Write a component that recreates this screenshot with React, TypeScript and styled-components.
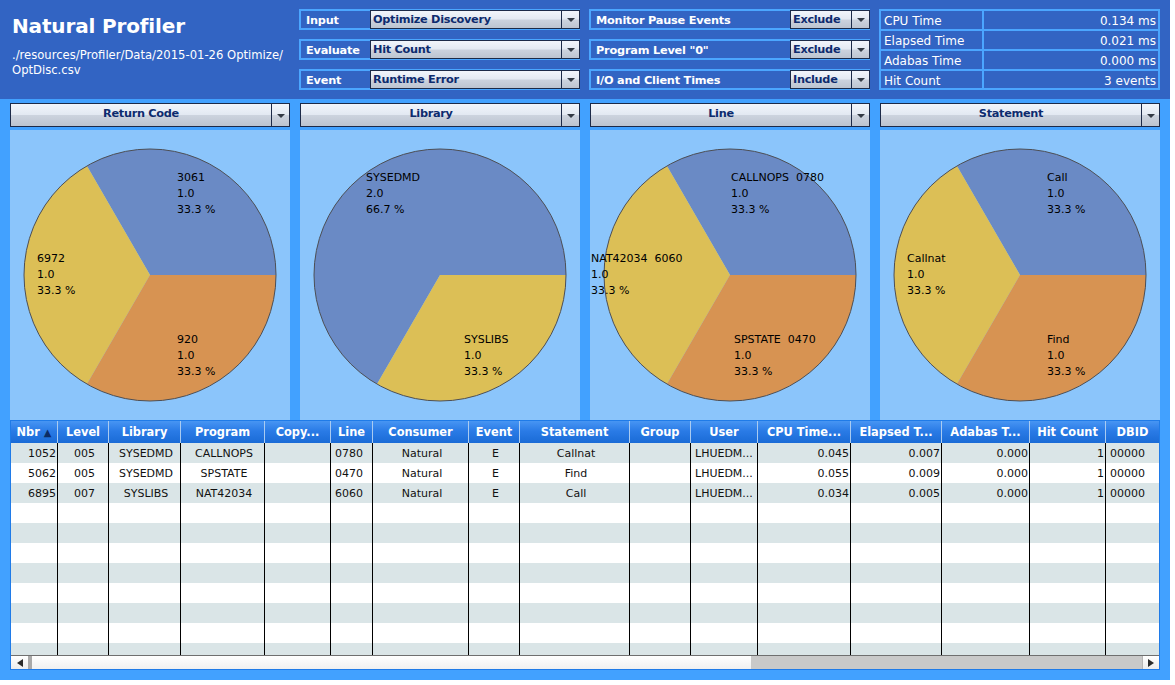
import React from 'react';
import styled, { createGlobalStyle } from 'styled-components';

const FONT = `"DejaVu Sans", Verdana, sans-serif`;

const Global = createGlobalStyle`
  html, body { margin: 0; padding: 0; background: #ffffff; }
  body { font-family: ${FONT}; }
  * { box-sizing: border-box; }
`;

const Root = styled.div`
  width: 1170px;
  height: 680px;
  background: #42a1ff;
  display: flex;
  flex-direction: column;
  overflow: hidden;
  font-family: ${FONT};
`;

/* ---------------- header band ---------------- */
const HeaderBand = styled.header`
  height: 99px;
  flex: none;
  background: #3264c3;
  display: flex;
  gap: 9px;
  padding: 9px 10px 0 12px;
`;

const TitleBlock = styled.div`
  width: 278px;
  color: #ffffff;
  display: flex;
  flex-direction: column;
`;

const Title = styled.h1`
  margin: 5px 0 0 0;
  font-size: 20px;
  font-weight: bold;
  letter-spacing: -0.15px;
  line-height: 24px;
`;

const PathText = styled.div`
  margin-top: 10px;
  font-size: 11.6px;
  line-height: 15px;
`;

const ControlColumn = styled.div`
  width: 281px;
  display: flex;
  flex-direction: column;
  gap: 9px;
`;

const ControlRow = styled.div`
  height: 21px;
  display: flex;
  align-items: stretch;
  border: 2px solid #4ba6ff;
  border-right: none;
  background: #3264c3;
`;

const ControlLabel = styled.div`
  flex: 1;
  color: #ffffff;
  font-weight: bold;
  font-size: 11.3px;
  letter-spacing: -0.2px;
  padding-left: 5px;
  padding-top: 1px;
  display: flex;
  align-items: center;
`;

const comboGradient = `linear-gradient(to bottom, #f1f5fb 0%, #e3e9f2 48%, #ccd3de 52%, #bcc4d0 100%)`;

const Combo = styled.div<{ $w?: number }>`
  ${(p) => (p.$w ? `width: ${p.$w}px; flex: none;` : 'flex: 1;')}
  display: flex;
  align-items: stretch;
  border: 1px solid #1c2a48;
  background: ${comboGradient};
  margin: -1px 0;
`;

const ComboText = styled.div<{ $center?: boolean }>`
  flex: 1;
  color: #0d2b6e;
  font-weight: bold;
  font-size: 11.3px;
  letter-spacing: -0.3px;
  display: flex;
  align-items: center;
  justify-content: ${(p) => (p.$center ? 'center' : 'flex-start')};
  padding: 0 0 ${(p) => (p.$center ? '3px' : '1px')} ${(p) => (p.$center ? '0' : '2px')};
  white-space: nowrap;
`;

const ComboArrow = styled.div`
  width: 18px;
  flex: none;
  border-left: 1px solid #1c2a48;
  display: flex;
  align-items: center;
  justify-content: center;
  &::after {
    content: '';
    width: 0;
    height: 0;
    border-left: 4px solid transparent;
    border-right: 4px solid transparent;
    border-top: 4px solid #333a45;
    margin-top: 1px;
  }
`;

const StatsTable = styled.div`
  width: 281px;
  height: 81px;
  display: grid;
  grid-template-columns: 101px 1fr;
  grid-template-rows: 20px 20px 20px 17px;
  border: 2px solid #4ba6ff;
`;

const StatCell = styled.div<{ $right?: boolean; $last?: boolean }>`
  color: #ffffff;
  font-size: 12px;
  display: flex;
  align-items: center;
  justify-content: ${(p) => (p.$right ? 'flex-end' : 'flex-start')};
  padding: 2px ${(p) => (p.$right ? '2px' : '0')} 0 ${(p) => (p.$right ? '0' : '3px')};
  border-bottom: ${(p) => (p.$last ? 'none' : '2px solid #4ba6ff')};
  border-left: ${(p) => (p.$right ? '2px solid #4ba6ff' : 'none')};
  white-space: nowrap;
`;

/* ---------------- charts ---------------- */
const ChartsRow = styled.div`
  display: flex;
  gap: 10px;
  padding: 4px 10px 0 10px;
  flex: none;
`;

const ChartCard = styled.div`
  width: 280px;
  display: flex;
  flex-direction: column;
  gap: 3px;
`;

const ChartCombo = styled(Combo)`
  height: 24px;
  margin: 0;
  flex: none;
`;

const Canvas = styled.div`
  height: 290px;
  background: #8bc5fb;
`;

const PieSvg = styled.svg`
  display: block;
  font-family: ${FONT};
  font-size: 11px;
`;

/* ---------------- table ---------------- */
const TableBox = styled.div`
  margin: 0 10px;
  height: 250px;
  border: 1px solid #1f7be8;
  background: #ffffff;
  display: flex;
  flex-direction: column;
  flex: none;
`;

const GridRow = styled.div<{ $cols: string }>`
  display: grid;
  grid-template-columns: ${(p) => p.$cols};
`;

const HeadRow = styled(GridRow)`
  height: 22px;
  flex: none;
  background: linear-gradient(to bottom, #4795f3 0%, #2a7be6 45%, #1a6bd6 100%);
`;

const HeadCell = styled.div<{ $last?: boolean }>`
  color: #ffffff;
  font-weight: bold;
  font-size: 11.4px;
  display: flex;
  align-items: center;
  justify-content: center;
  gap: 4px;
  white-space: nowrap;
  overflow: hidden;
  border-right: ${(p) => (p.$last ? 'none' : '1px solid #a9cbf1')};
`;

const SortMark = styled.span`
  color: #0c2c64;
  font-size: 10px;
`;

const Body = styled.div`
  flex: 1;
  overflow: hidden;
`;

const BodyRow = styled(GridRow)<{ $alt: boolean }>`
  height: 20px;
  background: ${(p) => (p.$alt ? '#dae5e7' : '#ffffff')};
`;

const BodyCell = styled.div<{ $align: string; $last?: boolean }>`
  font-size: 11px;
  color: #111111;
  display: flex;
  align-items: center;
  justify-content: ${(p) =>
    p.$align === 'right' ? 'flex-end' : p.$align === 'center' ? 'center' : 'flex-start'};
  padding: 0 1px 0 4px;
  white-space: nowrap;
  overflow: hidden;
  border-right: ${(p) => (p.$last ? 'none' : '1px solid #000000')};
`;

const ScrollBar = styled.div`
  height: 14px;
  flex: none;
  display: flex;
  border-top: 1px solid #6f6f6f;
  background: #c9c9c9;
`;

const ScrollBtn = styled.div<{ $dir: 'left' | 'right' }>`
  width: 17px;
  flex: none;
  background: linear-gradient(to bottom, #ffffff, #ececec);
  display: flex;
  align-items: center;
  justify-content: center;
  ${(p) => (p.$dir === 'right' ? 'border-left: 1px solid #b5b5b5;' : '')}
  &::after {
    content: '';
    width: 0;
    height: 0;
    border-top: 4px solid transparent;
    border-bottom: 4px solid transparent;
    ${(p) =>
      p.$dir === 'left'
        ? 'border-right: 6px solid #2a2a2a;'
        : 'border-left: 6px solid #2a2a2a;'}
  }
`;

const ScrollThumb = styled.div`
  width: 723px;
  flex: none;
  background: linear-gradient(to bottom, #ffffff, #f0f0f0);
  border-left: 4px solid #a9a9a9;
`;

const ScrollTrack = styled.div`
  flex: 1;
`;

/* ---------------- data ---------------- */
type Col = { h: string; w: number; align: 'left' | 'right' | 'center' };
const cols: Col[] = [
  { h: 'Nbr', w: 47, align: 'right' },
  { h: 'Level', w: 51, align: 'center' },
  { h: 'Library', w: 72, align: 'center' },
  { h: 'Program', w: 84, align: 'center' },
  { h: 'Copy...', w: 66, align: 'center' },
  { h: 'Line', w: 42, align: 'left' },
  { h: 'Consumer', w: 96, align: 'center' },
  { h: 'Event', w: 51, align: 'center' },
  { h: 'Statement', w: 110, align: 'center' },
  { h: 'Group', w: 61, align: 'center' },
  { h: 'User', w: 67, align: 'left' },
  { h: 'CPU Time...', w: 93, align: 'right' },
  { h: 'Elapsed T...', w: 91, align: 'right' },
  { h: 'Adabas T...', w: 88, align: 'right' },
  { h: 'Hit Count', w: 76, align: 'right' },
  { h: 'DBID', w: 53, align: 'left' },
];
const colTemplate = cols.map((c) => `${c.w}px`).join(' ');

const rows: string[][] = [
  ['1052', '005', 'SYSEDMD', 'CALLNOPS', '', '0780', 'Natural', 'E', 'Callnat', '', 'LHUEDM...', '0.045', '0.007', '0.000', '1', '00000'],
  ['5062', '005', 'SYSEDMD', 'SPSTATE', '', '0470', 'Natural', 'E', 'Find', '', 'LHUEDM...', '0.055', '0.009', '0.000', '1', '00000'],
  ['6895', '007', 'SYSLIBS', 'NAT42034', '', '6060', 'Natural', 'E', 'Call', '', 'LHUEDM...', '0.034', '0.005', '0.000', '1', '00000'],
];

const BLUE = '#6a8ac5';
const YELLOW = '#dcbf56';
const ORANGE = '#d79352';

type Slice = { from: number; to: number; color: string };
type Label = { x: number; y: number; lines: string[] };
type Chart = { title: string; slices: Slice[]; labels: Label[] };

const threeWay = (top: string, left: string, bottom: string, tx: number, lx: number, bx: number): Label[] => [
  { x: tx, y: 51, lines: [top, '1.0', '33.3 %'] },
  { x: lx, y: 132, lines: [left, '1.0', '33.3 %'] },
  { x: bx, y: 213, lines: [bottom, '1.0', '33.3 %'] },
];

const threeSlices: Slice[] = [
  { from: 0, to: 120, color: BLUE },
  { from: 120, to: 240, color: YELLOW },
  { from: 240, to: 360, color: ORANGE },
];

const charts: Chart[] = [
  { title: 'Return Code', slices: threeSlices, labels: threeWay('3061', '6972', '920', 167, 27, 167) },
  {
    title: 'Library',
    slices: [
      { from: 0, to: 240, color: BLUE },
      { from: 240, to: 360, color: YELLOW },
    ],
    labels: [
      { x: 66, y: 51, lines: ['SYSEDMD', '2.0', '66.7 %'] },
      { x: 164, y: 213, lines: ['SYSLIBS', '1.0', '33.3 %'] },
    ],
  },
  { title: 'Line', slices: threeSlices, labels: threeWay('CALLNOPS  0780', 'NAT42034  6060', 'SPSTATE  0470', 141, 1, 144) },
  { title: 'Statement', slices: threeSlices, labels: threeWay('Call', 'Callnat', 'Find', 167, 27, 167) },
];

const CX = 140;
const CY = 145;
const R = 126;
const pt = (a: number) => {
  const rad = (a * Math.PI) / 180;
  return `${(CX + R * Math.cos(rad)).toFixed(2)} ${(CY - R * Math.sin(rad)).toFixed(2)}`;
};
const slicePath = (s: Slice) =>
  `M ${CX} ${CY} L ${pt(s.from)} A ${R} ${R} 0 ${s.to - s.from > 180 ? 1 : 0} 0 ${pt(s.to)} Z`;

const Pie: React.FC<{ chart: Chart }> = ({ chart }) => (
  <PieSvg width={280} height={290} viewBox="0 0 280 290">
    {chart.slices.map((s, i) => (
      <path key={i} d={slicePath(s)} fill={s.color} />
    ))}
    <circle cx={CX} cy={CY} r={R} fill="none" stroke="#4d4f55" strokeWidth={1} />
    {chart.labels.map((l, i) => (
      <text key={i} x={l.x} y={l.y} fill="#000" style={{ whiteSpace: 'pre' }}>
        {l.lines.map((line, j) => (
          <tspan key={j} x={l.x} y={l.y + j * 16}>
            {line}
          </tspan>
        ))}
      </text>
    ))}
  </PieSvg>
);

const stats = [
  ['CPU Time', '0.134 ms'],
  ['Elapsed Time', '0.021 ms'],
  ['Adabas Time', '0.000 ms'],
  ['Hit Count', '3 events'],
];

export default function App() {
  const bodyRows = Array.from({ length: 11 }, (_, i) => rows[i] ?? cols.map(() => ''));
  return (
    <Root>
      <Global />
      <HeaderBand>
        <TitleBlock>
          <Title>Natural Profiler</Title>
          <PathText>
            ./resources/Profiler/Data/2015-01-26 Optimize/
            <br />
            OptDisc.csv
          </PathText>
        </TitleBlock>
        <ControlColumn>
          {[
            ['Input', 'Optimize Discovery'],
            ['Evaluate', 'Hit Count'],
            ['Event', 'Runtime Error'],
          ].map(([l, v]) => (
            <ControlRow key={l}>
              <ControlLabel>{l}</ControlLabel>
              <Combo $w={210}>
                <ComboText>{v}</ComboText>
                <ComboArrow />
              </Combo>
            </ControlRow>
          ))}
        </ControlColumn>
        <ControlColumn>
          {[
            ['Monitor Pause Events', 'Exclude'],
            ['Program Level "0"', 'Exclude'],
            ['I/O and Client Times', 'Include'],
          ].map(([l, v]) => (
            <ControlRow key={l}>
              <ControlLabel>{l}</ControlLabel>
              <Combo $w={80}>
                <ComboText>{v}</ComboText>
                <ComboArrow />
              </Combo>
            </ControlRow>
          ))}
        </ControlColumn>
        <StatsTable>
          {stats.map(([k, v], i) => (
            <React.Fragment key={k}>
              <StatCell $last={i === 3}>{k}</StatCell>
              <StatCell $right $last={i === 3}>
                {v}
              </StatCell>
            </React.Fragment>
          ))}
        </StatsTable>
      </HeaderBand>

      <ChartsRow>
        {charts.map((c) => (
          <ChartCard key={c.title}>
            <ChartCombo>
              <ComboText $center>{c.title}</ComboText>
              <ComboArrow />
            </ChartCombo>
            <Canvas>
              <Pie chart={c} />
            </Canvas>
          </ChartCard>
        ))}
      </ChartsRow>

      <TableBox>
        <HeadRow $cols={colTemplate}>
          {cols.map((c, i) => (
            <HeadCell key={c.h} $last={i === cols.length - 1}>
              {c.h}
              {i === 0 && <SortMark>▲</SortMark>}
            </HeadCell>
          ))}
        </HeadRow>
        <Body>
          {bodyRows.map((r, ri) => (
            <BodyRow key={ri} $cols={colTemplate} $alt={ri % 2 === 0}>
              {r.map((v, ci) => (
                <BodyCell key={ci} $align={cols[ci].align} $last={ci === cols.length - 1}>
                  {v}
                </BodyCell>
              ))}
            </BodyRow>
          ))}
        </Body>
        <ScrollBar>
          <ScrollBtn $dir="left" />
          <ScrollThumb />
          <ScrollTrack />
          <ScrollBtn $dir="right" />
        </ScrollBar>
      </TableBox>
    </Root>
  );
}
